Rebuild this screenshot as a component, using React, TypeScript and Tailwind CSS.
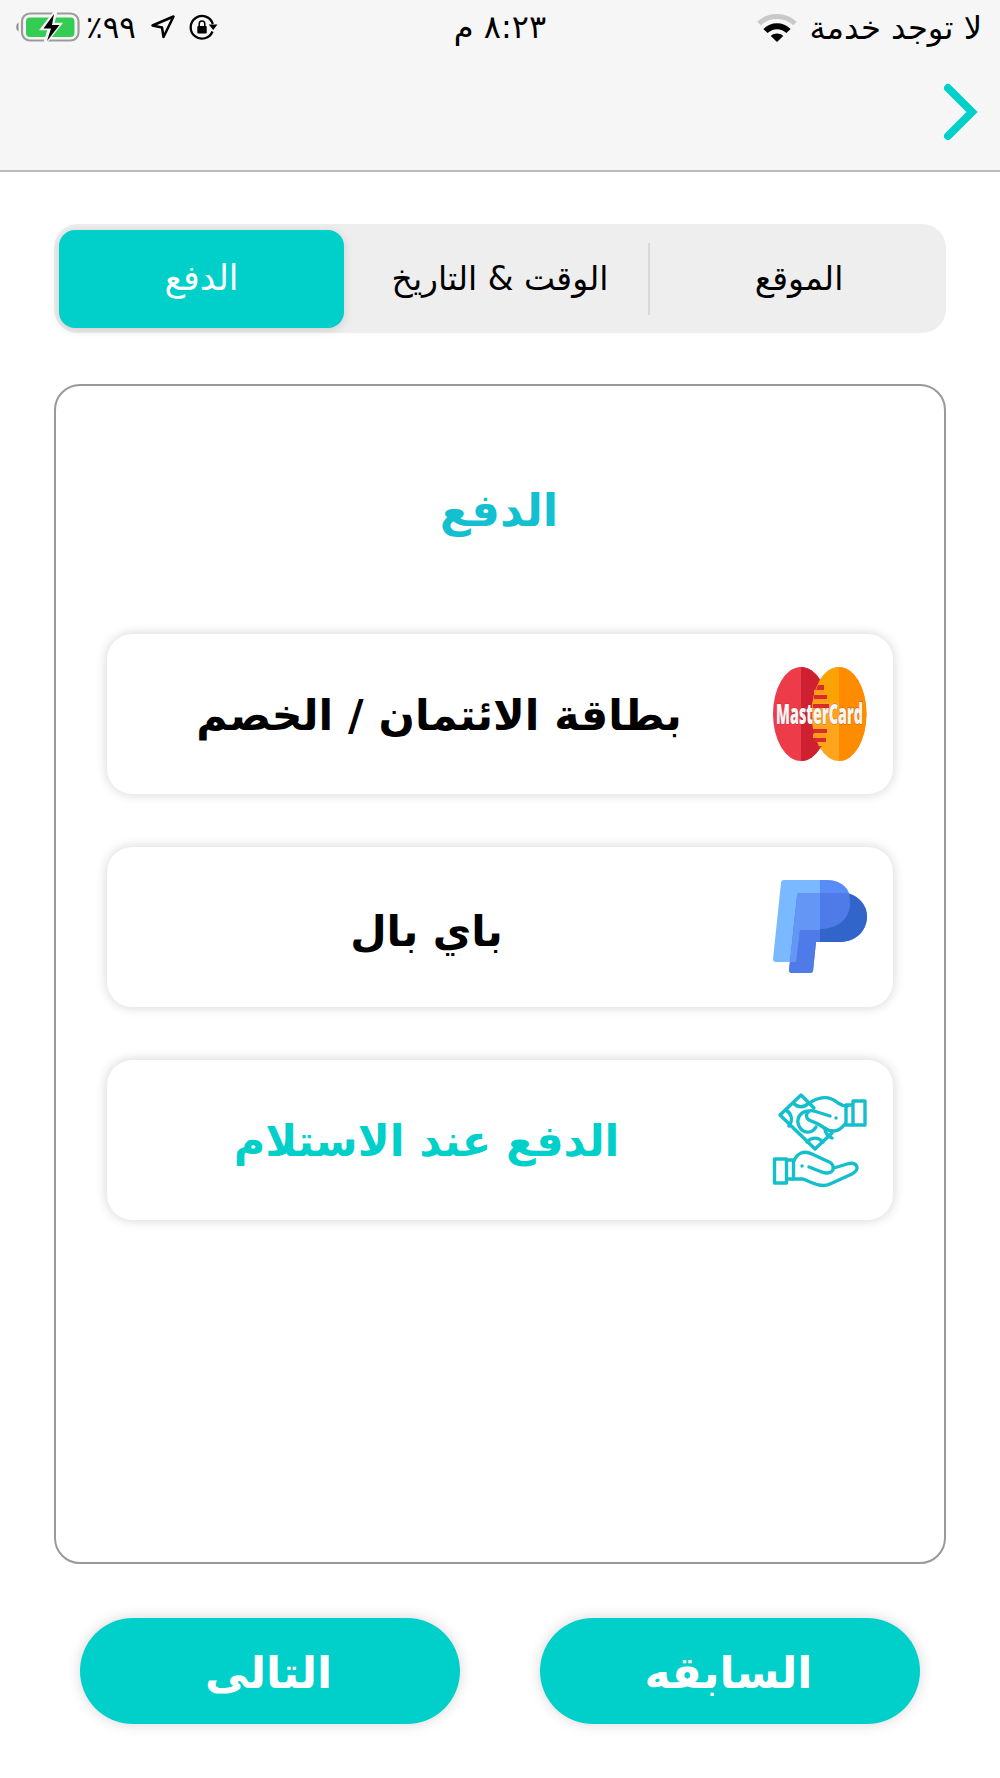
import type { ReactNode } from 'react'
import clsx from 'clsx'

const TEAL = '#00cfca'

function BatteryIcon() {
  return (
    <svg width="65" height="32" viewBox="0 0 65 32" fill="none">
      <path d="M2.500 11.500v9c-3-1.500-3-7.500 0-9z" fill="#8e8e8e" />
      <rect x="6" y="2.500" width="56.500" height="27" rx="8" stroke="#9b9b9b" strokeWidth="2.200" />
      <rect x="10" y="6.500" width="48.500" height="19.500" rx="4" fill="#34cc52" />
      <path d="M39.500 1 26.500 17.500h7L29.500 31 43.500 13.500h-7z" fill="#f6f6f6" stroke="#f6f6f6" strokeWidth="3.500" />
      <path d="M38 3 27.500 17.500h7.500L31 30 43.500 14H36z" fill="#000" />
    </svg>
  )
}

function LocationIcon() {
  return (
    <svg width="26" height="26" viewBox="0 0 26 26" fill="none" stroke="#000" strokeWidth="2.500" strokeLinejoin="round">
      <path d="M23.500 2.500 2.500 11.500l9.500 2 1.500 9.500z" />
    </svg>
  )
}

function RotationLockIcon() {
  return (
    <svg width="29" height="27" viewBox="0 0 29 27" fill="none">
      <path d="M23.500 17.500A11.300 11.300 0 1 1 23.800 10" stroke="#000" strokeWidth="2.300" />
      <path d="M19.800 10.500h8.700l-4.300 5.500z" fill="#000" />
      <rect x="8.300" y="12" width="9.400" height="7.500" rx="1" fill="#000" />
      <path d="M10.200 12v-2.200a2.800 2.800 0 0 1 5.600 0V12" stroke="#000" strokeWidth="1.500" />
    </svg>
  )
}

function WifiIcon() {
  return (
    <svg width="40" height="29" viewBox="0 0 40 29" fill="none">
      <path d="M2 10.500c10-9.500 26-9.500 36 0" stroke="#c9c9c9" strokeWidth="5" />
      <path d="M8.500 18c6.500-6.500 16.500-6.500 23 0" stroke="#000" strokeWidth="6" />
      <path d="M13.800 23c3.500-3.200 8.900-3.200 12.400 0L20 29z" fill="#000" />
    </svg>
  )
}

function MasterCardIcon() {
  return (
    <svg className="overflow-visible" width="94" height="94" viewBox="0 0 94 94" direction="ltr">
      <ellipse cx="28" cy="47" rx="28" ry="47" fill="#ee3b49" />
      <path d="M28 0a28 47 0 0 1 0 94z" fill="#cf2032" />
      <ellipse cx="66" cy="47" rx="27.500" ry="47" fill="#ffa51c" />
      <path d="M66 0a27.500 47 0 0 1 0 94z" fill="#ff8b00" />
      <path d="M66 0C57 0 50 7 46 15c3 6 6 13 7 20h13z" fill="#fba300" />
      <path d="M45 18h6v5H43zM41 28h13v4H41zM40 37h16v4H40zM40 62h14v4H40zM42 71h11v4H42zM44 79h5l-3 3z" fill="#d92a2c" />
      <path d="M41 23h11v4H41zM40 32h14v4H40zM40 67h14v4H40z" fill="#ff9c17" />
      <text
        x="3"
        y="57"
        textLength="87"
        lengthAdjust="spacingAndGlyphs"
        textAnchor="start"
        fontFamily="Open Sans, Liberation Sans, sans-serif"
        fontSize="28"
        fontWeight="800"
        fill="#f8f4f4"
        stroke="#8b3a3a"
        strokeOpacity="0.35"
        strokeWidth="1.500"
        paintOrder="stroke"
      >
        MasterCard
      </text>
    </svg>
  )
}

function PayPalIcon() {
  return (
    <svg width="94" height="94" viewBox="0 0 94 94">
      <path d="M11 0h42c17 0 27 11 24 27-3 15-15 23-31 23H27l-3 30a3 3 0 0 1-3 2H3a3 3 0 0 1-3-3L8 3q0-3 3-3z" fill="#7ab8ff" />
      <path d="M47 0h6c17 0 27 11 24 27-3 15-15 23-30 23z" fill="#5a8cf8" />
      <path d="M27 13h47c12 3 20 13 20 23 0 16-12 26-28 26H43l-3 29a3 3 0 0 1-3 2H19a3 3 0 0 1-3-3l8-74q0-3 3-3z" fill="#4f7be8" />
      <path d="M76 13.500C87 17 94 26 94 36c0 16-12 26-28 26H47V49c17 0 29-9 30-24q0-7-1-11.500z" fill="#3265c9" />
      <path d="M27 13h20v37H27l-4 32h-6l7-66q0-3 3-3z" fill="#6496f6" />
      <path d="M27 50h20v12h-4l-3 29a3 3 0 0 1-3 2H19a3 3 0 0 1-3-3l1-8h7z" fill="#4f7be8" />
    </svg>
  )
}

function CashIcon() {
  return (
    <svg className="overflow-visible" width="94" height="94" viewBox="0 0 94 94" fill="none" stroke="#14bfcd" strokeWidth="3.400" strokeLinecap="round" strokeLinejoin="round">
      {/* banknote */}
      <path d="M41 15 28 2 7 22l35 34 17-16" />
      <path d="M20 10c5 5 11 5 16 0M13 17c6 4 7 10 3 16M34 49c5-5 11-5 16 0M52 35c0 5 2 8 7 10" />
      <path d="M35 18c-9 1-12 9-9 15 4 8 13 8 17 1" />
      {/* giving hand */}
      <path d="M57 23 41 18c-7-2-10 6-5 9 6 3 11 4 15 8 8 5 15 4 21-4" />
      <path d="M38 9c12-7 20-5 27 1 3 2 6 3 9 3M63 25h.1" />
      <path d="M73 12h7v20h-7zM80 8h12v24H80z" />
      {/* receiving hand */}
      <path d="M1.500 66h12v24h-12zM13.500 67h7v19h-7z" />
      <path d="M21 68c3-8 10-11 18-7l15 7c9 3 8 13-1 12-6-1-11-4-17-6M29 73h.1" />
      <path d="m61 75 13-4c10-3 14 5 5 10L57 91c-9 4-17-1-27-5h-9" />
    </svg>
  )
}

const tabs = [
  { label: 'الموقع', className: 'w-[291px] pl-[7px] text-[33px] text-black' },
  { label: 'الوقت & التاريخ', className: 'w-[306px] pl-[6px] text-[33px] text-black' },
  { label: 'الدفع', className: 'w-[285px] rounded-[16px] bg-[#00cfca] text-[35px] text-white shadow-[0_2px_10px_rgba(0,0,0,0.14)]' },
]

type Method = { label: string; icon: ReactNode; className: string }

const methods: Method[] = [
  { label: 'بطاقة الائتمان / الخصم', icon: <MasterCardIcon />, className: 'pl-[25px] pt-[2px] text-[42.7px] text-black' },
  { label: 'باي بال', icon: <PayPalIcon />, className: 'pt-[8px] text-[42px] text-black' },
  { label: 'الدفع عند الاستلام', icon: <CashIcon />, className: 'pt-[3px] text-[43px] text-[#00cfca]' },
]

function StatusBar() {
  return (
    <div className="grid h-[54px] grid-cols-3 items-center text-[32px] leading-none text-black">
      <div className="flex items-center gap-[13px] pr-[18px] pt-[2px]">
        <span className="whitespace-nowrap text-[32.2px]">لا توجد خدمة</span>
        <WifiIcon />
      </div>
      <div className="text-center">٨:٢٣ م</div>
      <div dir="ltr" className="flex items-center pl-[16px]">
        <BatteryIcon />
        <span className="ml-[5px] w-[51px] whitespace-nowrap text-[31px]">٪٩٩</span>
        <span className="ml-[13px]"><LocationIcon /></span>
        <span className="ml-[13px]"><RotationLockIcon /></span>
      </div>
    </div>
  )
}

export default function App() {
  return (
    <div dir="rtl" className="flex h-[1778px] w-[1000px] flex-col overflow-hidden bg-white font-['DejaVu_Sans',sans-serif]">
      <header className="h-[172px] border-b-2 border-[#bcbcbc] bg-[#f6f6f6]">
        <StatusBar />
        <button className="mr-[22px] mt-[28px] block" aria-label="رجوع">
          <svg width="36" height="60" viewBox="0 0 36 60" fill="none" stroke={TEAL} strokeWidth="8" strokeLinecap="round">
            <path d="M6 6 30 30 6 54" />
          </svg>
        </button>
      </header>

      <nav className="mx-[54px] mt-[52px] flex h-[109px] rounded-[24px] bg-[#eeeeee] px-[5px] pt-[6px] pb-[5px]">
        {tabs.map((tab, i) => (
          <button
            key={tab.label}
            className={clsx('relative flex items-center justify-center whitespace-nowrap pb-[1px]', tab.className)}
          >
            {i === 1 && <i className="absolute right-0 top-[13px] h-[72px] w-[2px] bg-[#d8d8d8]" />}
            <span>{tab.label}</span>
          </button>
        ))}
      </nav>

      <main className="mx-[54px] mt-[51px] h-[1180px] rounded-[26px] border-2 border-[#999999] px-[51px]">
        <h1 className="mt-[89px] h-[72px] pr-[4px] pl-[2px] text-center text-[45px] font-bold leading-[72px] text-[#12c0d0]">الدفع</h1>
        <div className="mt-[87px] flex flex-col gap-[53px]">
          {methods.map((m) => (
            <button
              key={m.label}
              className="flex h-[160px] items-center rounded-[25px] bg-white pr-[26px] shadow-[0_0_12px_rgba(0,0,0,0.18)]"
            >
              {m.icon}
              <span className={clsx('mr-[27px] flex-1 whitespace-nowrap text-center font-bold', m.className)}>
                {m.label}
              </span>
            </button>
          ))}
        </div>
      </main>

      <footer className="mt-[54px] flex gap-[80px] px-[80px]">
        {['السابقه', 'التالى'].map((label) => (
          <button
            key={label}
            className="h-[106px] flex-1 rounded-full bg-[#00cfca] pr-[3px] pt-[3px] text-[44px] font-bold text-white shadow-[0_0_14px_rgba(0,0,0,0.16)]"
          >
            {label}
          </button>
        ))}
      </footer>
    </div>
  )
}
